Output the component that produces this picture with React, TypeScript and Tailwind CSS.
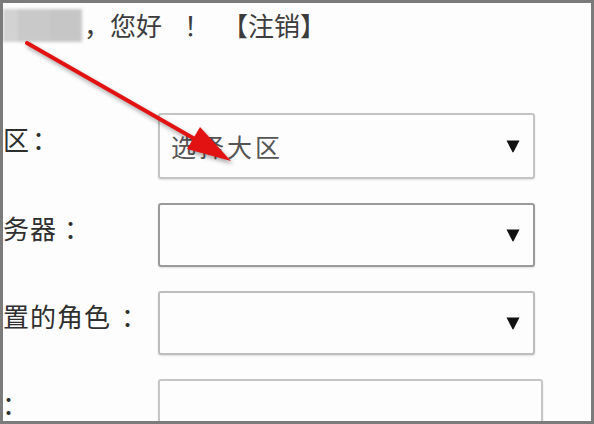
import { ReactNode } from "react";

const font = "font-['Noto_Sans_CJK_SC','Noto_Sans',sans-serif]";

function Caret() {
  return (
    <svg width="14" height="13" viewBox="0 0 14 13" className="shrink-0">
      <path d="M0.5 0.5 H13.5 L7.6 12 Q7 12.8 6.4 12 Z" fill="#111" />
    </svg>
  );
}

type Row = {
  label: string;
  shift: string;
  gap: string;
  value?: string;
  caret: boolean;
  box: string;
};

const rows: Row[] = [
  { label: "选择大区", shift: "ml-[-81px]", gap: "ml-[2px]", value: "选择大区", caret: true, box: "w-[377px] h-[66px] border-[#c4c4c4]" },
  { label: "选择服务器", shift: "ml-[-81px]", gap: "ml-[7px]", caret: true, box: "w-[377px] h-[64px] border-[#9a9a9a]" },
  { label: "要设置的角色", shift: "ml-[-54px]", gap: "ml-[10px]", caret: true, box: "w-[377px] h-[64px] border-[#bdbdbd]" },
  { label: "验证码", shift: "ml-[-82px]", gap: "ml-0", caret: false, box: "w-[385px] h-[64px] border-[#c6c6c6]" },
];

function FormRow({ row }: { row: Row }): ReactNode {
  return (
    <div className="flex items-center">
      <div className="w-[155px] overflow-hidden pb-[14px]">
        <div className={`${row.shift} flex whitespace-nowrap text-[26px] leading-none tracking-[1px] text-[#2f2f2f]`}>
          <span>{row.label}</span>
          <span className={row.gap}>：</span>
        </div>
      </div>
      <div
        className={`${row.box} flex items-center justify-between rounded-[3px] border-2 bg-[#fdfdfd] pl-[11px] pr-[13px] shadow-[0_1px_2px_rgba(0,0,0,0.12)]`}
      >
        <span className="text-[25px] leading-none tracking-[3px] text-[#555]">{row.value ?? ""}</span>
        {row.caret && <Caret />}
      </div>
    </div>
  );
}

export default function App() {
  return (
    <div className={`${font} relative h-[424px] w-[594px] overflow-hidden border-[3px] border-[#7b7b7b] bg-[#fdfdfd]`}>
      <header className="flex h-[44px] items-center">
        <div className="flex h-[33px] w-[79px] blur-[1.5px]">
          <div className="w-[15px] bg-[#d2d2d2]" />
          <div className="w-[32px] bg-[#c9c9c9]" />
          <div className="flex-1 bg-[#c6c6c6]" />
        </div>
        <div className="ml-[2px] flex whitespace-nowrap text-[26px] leading-none text-[#3c3c3c]">
          <span>，您好</span>
          <span className="ml-[22px]">！</span>
          <span className="ml-[12px]">【注销】</span>
        </div>
      </header>

      <div className="mt-[66px] flex flex-col gap-[24px]">
        {rows.map((row) => (
          <FormRow key={row.label} row={row} />
        ))}
      </div>

      <svg
        className="pointer-events-none absolute left-[-3px] top-[-3px] drop-shadow-[2px_3px_2px_rgba(0,0,0,0.35)]"
        width="594"
        height="424"
        viewBox="0 0 594 424"
      >
        <line x1="27" y1="43" x2="200" y2="142" stroke="#e31212" strokeWidth="4" strokeLinecap="round" />
        <polygon points="231,161 187,149 200,127" fill="#e31212" />
      </svg>
    </div>
  );
}
